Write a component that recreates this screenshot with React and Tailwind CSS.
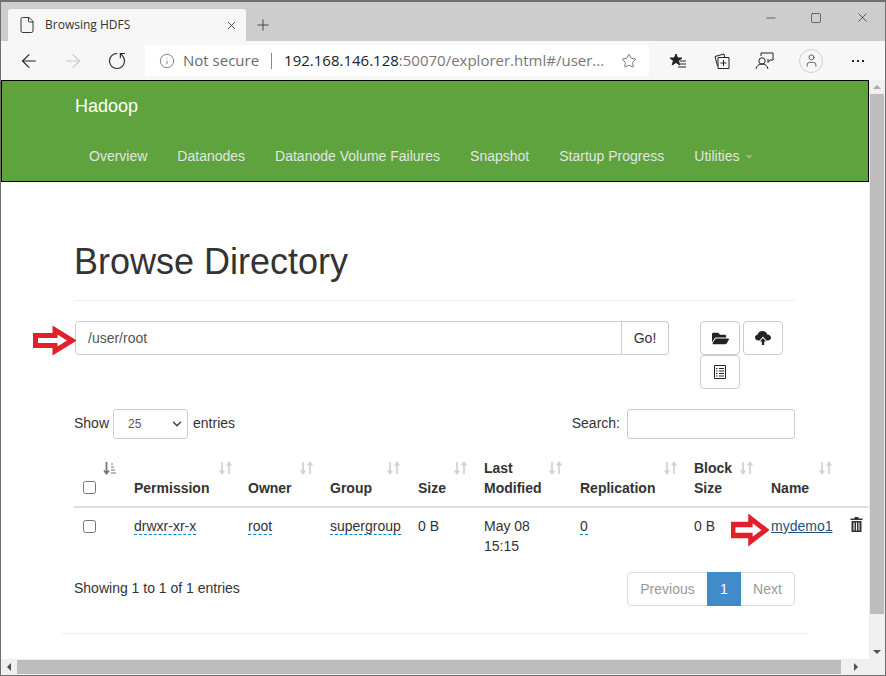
import { ArrowLeft, ArrowRight, RotateCw, Info, Star, Plus, X, Minus, Square, File, User, ChevronDown } from "lucide-react";
import { FaFolderOpen } from "react-icons/fa";

const navLinks = ["Overview", "Datanodes", "Datanode Volume Failures", "Snapshot", "Startup Progress"];

const columns = [
  { label: ["Permission"], width: "w-[114px]", sort: "w-[99px]" },
  { label: ["Owner"], width: "w-[82px]", sort: "w-[66px]" },
  { label: ["Group"], width: "w-[88px]", sort: "w-[71px]" },
  { label: ["Size"], width: "w-[66px]", sort: "w-[50px]" },
  { label: ["Last", "Modified"], width: "w-[96px]", sort: "w-[79px]" },
  { label: ["Replication"], width: "w-[114px]", sort: "w-[98px]" },
  { label: ["Block", "Size"], width: "w-[77px]", sort: "w-[60px]" },
  { label: ["Name"], width: "w-[79px]", sort: "w-[62px]" },
];

function SortIcon({ active }) {
  if (active) {
    return (
      <svg width="16" height="14" viewBox="0 0 16 14" fill="none" stroke="#777">
        <path d="M4.5 1v11M2 9.5l2.5 3 2.5-3" strokeWidth="1.8" />
        <path d="M9 3h2M9 6h3M9 9h4M9 12h5" strokeWidth="1.2" />
      </svg>
    );
  }
  return (
    <svg width="15" height="14" viewBox="0 0 15 14" fill="none" stroke="#d4d4d4" strokeWidth="1.8">
      <path d="M4 1v11M1.8 9.5l2.2 3 2.2-3" />
      <path d="M11 13V2M8.8 4.5l2.2-3 2.2 3" />
    </svg>
  );
}

function RedArrow({ className }) {
  return (
    <svg className={className} viewBox="0 0 43 31" preserveAspectRatio="none" fill="white" stroke="#e2202c" strokeWidth="5">
      <path d="M2.5 10.5H22V5l17 10.500-17 10.500V20.500H2.500z" />
    </svg>
  );
}

function Toolbar() {
  return (
    <div className="flex h-[39px] items-center bg-[#f7f7f7] pl-[17px] text-[#222]">
      <ArrowLeft size={22} strokeWidth={1.2} />
      <ArrowRight size={22} strokeWidth={1.2} className="ml-[22px] text-[#c8c8c8]" />
      <RotateCw size={20} strokeWidth={1.3} className="ml-[23px] -scale-x-100 rotate-90" />
      <div className="ml-[18px] flex h-[31px] w-[504px] items-center bg-white pl-[14px] font-['Open_Sans',sans-serif] text-[15px]">
        <Info size={16} strokeWidth={1.2} className="text-[#666]" />
        <span className="ml-[8px] text-[#6b6b6b]">Not secure</span>
        <span className="ml-[12px] h-[16px] w-px bg-[#888]" />
        <span className="ml-[12px] text-[#222]">192.168.146.128<span className="text-[#777]">:50070/explorer.html#/user...</span></span>
        <Star size={16} strokeWidth={1.2} className="ml-auto mr-[12px] text-[#555]" />
      </div>
      <svg className="ml-[20px]" width="18" height="18" viewBox="0 0 18 18" fill="none" stroke="#222">
        <path d="M7 2l1.6 4H13L9.5 8.7l1.2 4.3L7 10.4 3.2 13l1.3-4.3L1 6h4.4z" fill="#222" />
        <path d="M11 9h6M11 12h6M9 15h8" />
      </svg>
      <svg className="ml-[26px]" width="18" height="18" viewBox="0 0 18 18" fill="none" stroke="#222">
        <path d="M5 5.5h11v11H5zM2 4.5l9-2.5.8 3.5M2 4.5l2.5 9.5M10.5 8v6M7.5 11h6" />
      </svg>
      <svg className="ml-[24px]" width="20" height="20" viewBox="0 0 20 20" fill="none" stroke="#222">
        <circle cx="7" cy="10" r="3.2" />
        <path d="M1 18c.6-3.4 2.800-5 6-5s5.400 1.600 6 5M6 5V2h12v7h-3l-2 2.500V8" />
      </svg>
      <span className="ml-[24px] flex h-[24px] w-[24px] items-center justify-center rounded-full border border-[#d0d0d0]">
        <User size={15} strokeWidth={1.2} className="text-[#333]" />
      </span>
      <span className="ml-[29px] flex gap-[3px]">
        <span className="h-[2px] w-[2px] bg-[#222]" />
        <span className="h-[2px] w-[2px] bg-[#222]" />
        <span className="h-[2px] w-[2px] bg-[#222]" />
      </span>
    </div>
  );
}

function Navbar() {
  return (
    <nav className="h-[102px] border border-black bg-[#5fa33e] pl-[73px]">
      <div className="pt-[14px] text-[18px] leading-[22px] text-white">Hadoop</div>
      <div className="mt-[29px] flex pl-[14px] text-[14px] leading-[20px] text-[#e4e4e4]">
        {navLinks.map((link) => (
          <span key={link} className="mr-[30px]">{link}</span>
        ))}
        <span className="flex items-center">
          Utilities
          <span className="ml-[6px] mt-[2px] border-x-[4px] border-t-[4px] border-x-transparent border-t-[#8cbc75]" />
        </span>
      </div>
    </nav>
  );
}

function Table() {
  return (
    <table className="w-[794px] table-fixed border-collapse text-[14px] leading-[20px] text-[#333]">
      <thead>
        <tr className="border-b-2 border-[#ddd]">
          <th className="relative h-[48px] w-[52px] p-0 align-bottom">
            <span className="absolute left-[28px] top-[3px]"><SortIcon active /></span>
            <input type="checkbox" className="mb-[12px] ml-[9px] block h-[13px] w-[13px]" />
          </th>
          {columns.map((col) => (
            <th key={col.label[0]} className={`relative p-0 pb-[8px] pl-[8px] pr-0 text-left align-bottom font-bold ${col.width}`}>
              <span className={`absolute top-[3px] flex justify-end ${col.sort}`}><SortIcon /></span>
              {col.label.map((line) => (
                <div key={line}>{line}</div>
              ))}
            </th>
          ))}
          <th />
        </tr>
      </thead>
      <tbody>
        <tr className="h-[50px] align-top">
          <td className="pt-[8px]"><input type="checkbox" className="ml-[9px] mt-[4px] block h-[13px] w-[13px]" /></td>
          <td className="pl-[8px] pt-[8px]"><span className="border-b border-dashed border-[#08c]">drwxr-xr-x</span></td>
          <td className="pl-[8px] pt-[8px]"><span className="border-b border-dashed border-[#08c]">root</span></td>
          <td className="pl-[8px] pt-[8px]"><span className="border-b border-dashed border-[#08c]">supergroup</span></td>
          <td className="pl-[8px] pt-[8px]">0 B</td>
          <td className="pl-[8px] pt-[8px]">May 08<br />15:15</td>
          <td className="pl-[8px] pt-[8px]"><span className="border-b border-dashed border-[#08c]">0</span></td>
          <td className="pl-[8px] pt-[8px]">0 B</td>
          <td className="pl-[8px] pt-[8px] text-[#23527c] underline">mydemo1</td>
          <td className="pl-[8px] pt-[9px]">
            <svg width="13" height="15" viewBox="0 0 13 15" fill="#333">
              <path d="M4.500 0h4v1.500h4V3H.5V1.500h4zM1.500 4h10v11h-10zM3.500 5.500v8h1v-8zM6 5.500v8h1v-8zM8.500 5.500v8h1v-8z" fillRule="evenodd" />
            </svg>
          </td>
        </tr>
      </tbody>
    </table>
  );
}

function Content() {
  return (
    <div className="relative h-full w-[868px] overflow-hidden bg-white font-['Liberation_Sans',sans-serif] text-[14px] text-[#333]">
      <Navbar />
      <div className="w-[750px] pl-[73px] pr-0">
        <h1 className="mt-[60px] text-[36px] font-normal leading-[40px]">Browse Directory</h1>
        <div className="mt-[18px] w-[721px] border-t border-[#eee]" />
        <div className="mt-[20px] flex w-[721px] items-start">
          <div className="ml-px flex h-[34px] w-[594px]">
            <div className="flex flex-1 items-center rounded-l border border-[#ccc] pl-[12px] text-[#555]">/user/root</div>
            <div className="flex w-[47px] items-center justify-center rounded-r border border-l-0 border-[#ccc]">Go!</div>
          </div>
          <div className="ml-[31px] flex w-[84px] flex-wrap">
            <span className="flex h-[34px] w-[40px] items-center justify-center rounded border border-[#ccc]">
              <FaFolderOpen size={17} className="text-[#222]" />
            </span>
            <span className="ml-[3px] flex h-[34px] w-[40px] items-center justify-center rounded border border-[#ccc]">
              <svg width="16" height="14" viewBox="0 0 16 14" fill="#222">
                <path d="M3.500 9.500C1.500 9.500 0 8.300 0 6.500 0 5 1 3.900 2.500 3.700 3 1.600 5 0 7.500 0c2.400 0 4.300 1.500 4.800 3.500C14.400 3.700 16 5 16 6.800c0 1.600-1.400 2.700-3 2.700h-1.500L8 5.500 4.500 9.500z" />
                <path d="M8 7l3 3.500H9.200V14H6.800v-3.500H5z" />
              </svg>
            </span>
            <span className="flex h-[34px] w-[40px] items-center justify-center rounded border border-[#ccc]">
              <svg width="14" height="14" viewBox="0 0 14 14" fill="none" stroke="#222">
                <path d="M1.500.5h11v13h-11z" />
                <path d="M3 3.500h1.500M6 3.500h5M3 6h1.500M6 6h5M3 8.500h1.500M6 8.500h5M3 11h1.500M6 11h5" />
              </svg>
            </span>
          </div>
        </div>
        <div className="mt-[20px] flex h-[30px] w-[721px] items-center">
          <span className="-mt-[2px]">Show</span>
          <span className="ml-[4px] flex h-[30px] w-[75px] items-center rounded-[3px] border border-[#ccc] pl-[14px] text-[12px] text-[#555]">
            25
            <ChevronDown size={14} strokeWidth={2.5} className="ml-auto mr-[3px] text-[#444]" />
          </span>
          <span className="-mt-[2px] ml-[5px]">entries</span>
          <span className="-mt-[2px] ml-auto">Search:</span>
          <span className="ml-[7px] h-[30px] w-[168px] rounded-[3px] border border-[#ccc]" />
        </div>
        <div className="mt-[19px] w-[794px]"><Table /></div>
        <div className="mt-[15px] flex w-[721px] items-center justify-between">
          <span className="-mt-[2px]">Showing 1 to 1 of 1 entries</span>
          <div className="flex h-[34px] items-stretch rounded border border-[#ddd] text-[#999]">
            <span className="flex w-[79px] items-center justify-center">Previous</span>
            <span className="-my-px flex w-[34px] items-center justify-center bg-[#428bca] text-white">1</span>
            <span className="flex w-[53px] items-center justify-center">Next</span>
          </div>
        </div>
      </div>
      <div className="ml-[61px] mt-[27px] w-[746px] border-t border-[#eee]" />
      <RedArrow className="absolute left-[32px] top-[245px] h-[31px] w-[43px]" />
      <RedArrow className="absolute left-[730px] top-[433px] h-[34px] w-[38px]" />
    </div>
  );
}

export default function App() {
  return (
    <div className="flex h-[676px] w-[886px] flex-col overflow-hidden border-b border-l border-r border-t-2 border-[#6f6f6f] bg-[#f7f7f7]">
      <div className="flex h-[39px] items-end bg-[#cdcdcd] font-['Open_Sans',sans-serif]">
        <div className="ml-[7px] flex h-[32px] w-[238px] items-center rounded-t-[3px] bg-[#f7f7f7] pl-[10px] text-[12px] text-[#333]">
          <File size={18} strokeWidth={1.2} className="text-[#222]" />
          <span className="ml-[9px]">Browsing HDFS</span>
          <X size={13} strokeWidth={1.5} className="ml-auto mr-[8px] text-[#222]" />
        </div>
        <Plus size={18} strokeWidth={1.1} className="mb-[7px] ml-[8px] text-[#333]" />
        <div className="mb-[16px] ml-auto flex items-center text-[#222]">
          <Minus size={14} strokeWidth={1.1} />
          <Square size={12} strokeWidth={1.2} className="ml-[32px]" />
          <X size={15} strokeWidth={1.1} className="ml-[33px] mr-[15px]" />
        </div>
      </div>
      <Toolbar />
      <div className="flex min-h-0 flex-1">
        <Content />
        <div className="flex flex-1 flex-col items-center bg-[#f0f0f0]">
          <span className="mt-[5px] border-x-[4px] border-b-[4px] border-x-transparent border-b-[#aaa]" />
          <span className="mt-[5px] h-[520px] w-[14px] bg-[#bdbdbd]" />
          <span className="mt-auto mb-[5px] border-x-[4px] border-t-[4px] border-x-transparent border-t-[#505050]" />
        </div>
      </div>
      <div className="flex h-[16px] items-center bg-[#f0f0f0]">
        <span className="ml-[6px] border-y-[4px] border-r-[4px] border-y-transparent border-r-[#505050]" />
        <span className="ml-[6px] h-[14px] w-[824px] bg-[#bdbdbd]" />
        <span className="ml-[13px] border-y-[4px] border-l-[4px] border-y-transparent border-l-[#505050]" />
      </div>
    </div>
  );
}
